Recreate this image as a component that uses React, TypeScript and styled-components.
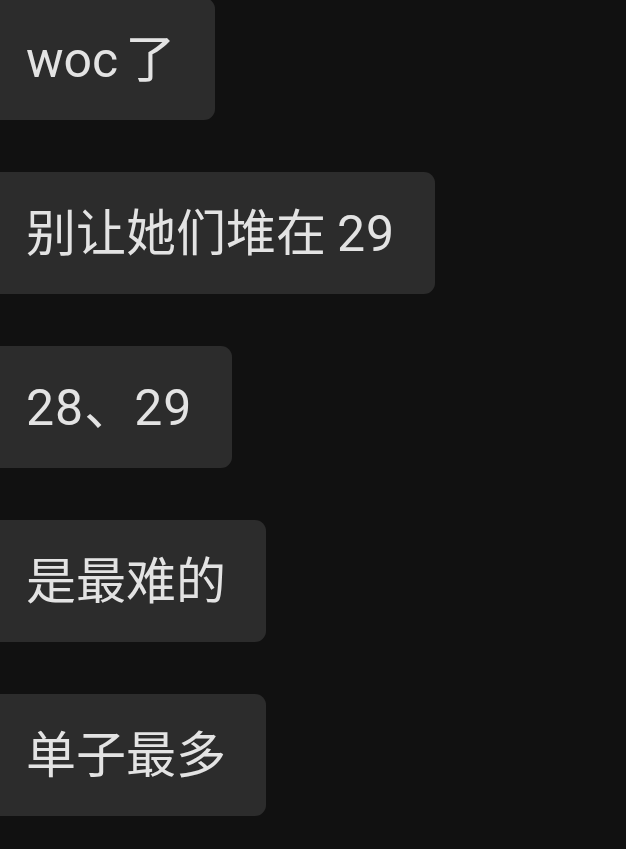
import React from "react";
import styled, { createGlobalStyle } from "styled-components";

const GlobalStyle = createGlobalStyle`
  html, body {
    margin: 0;
    padding: 0;
    background: #111111;
    overflow: hidden;
  }
  body {
    font-family: "Roboto", "Noto Sans CJK SC", sans-serif;
    -webkit-font-smoothing: antialiased;
  }
`;

const Screen = styled.div`
  width: 626px;
  height: 849px;
  background: #111111;
  overflow: hidden;
`;

const Thread = styled.div`
  display: flex;
  flex-direction: column;
  align-items: flex-start;
  gap: 52px;
  margin-top: -2px;
  margin-left: -20px;
`;

const Bubble = styled.div`
  box-sizing: border-box;
  height: 122px;
  display: flex;
  align-items: center;
  padding: 1px 40px 0 46px;
  background: #2c2c2c;
  border-radius: 11px;
  color: #e3e3e3;
  font-size: 50px;
  line-height: 1;
  white-space: nowrap;
`;

/* breathing room between Latin and CJK runs */
const Gap = styled.span<{ $w: number }>`
  display: inline-block;
  width: ${(p) => p.$w}px;
`;

const Num = styled.span`
  letter-spacing: 1px;
`;

export default function App() {
  return (
    <Screen>
      <GlobalStyle />
      <Thread>
        <Bubble>
          woc<Gap $w={7} />了
        </Bubble>
        <Bubble>
          别让她们堆在<Gap $w={11} /><Num>29</Num>
        </Bubble>
        <Bubble>
          <Num>28</Num>、<Num>29</Num>
        </Bubble>
        <Bubble>是最难的</Bubble>
        <Bubble>单子最多</Bubble>
      </Thread>
    </Screen>
  );
}
